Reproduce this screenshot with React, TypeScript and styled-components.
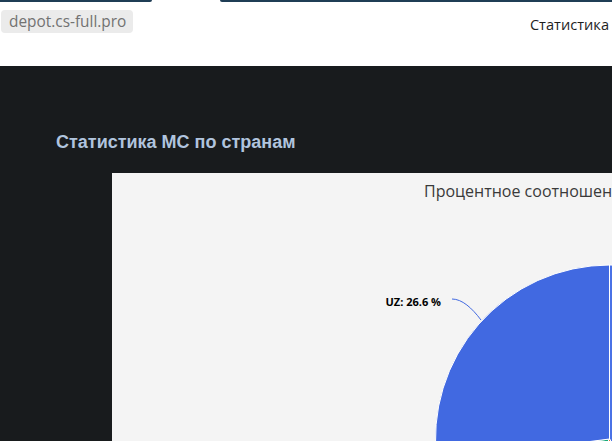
import styled, { createGlobalStyle } from "styled-components";

const GlobalStyle = createGlobalStyle`
  html, body {
    margin: 0;
    padding: 0;
    background: #ffffff;
    overflow: hidden;
  }
  body {
    width: 612px;
    height: 441px;
    font-family: "Open Sans", "Noto Sans", sans-serif;
  }
`;

const slices = [
  { name: "RU", value: 40.1, color: "#4a72e6" },
  { name: "KZ", value: 18.3, color: "#e8743b" },
  { name: "TJ", value: 13.4, color: "#19a979" },
  { name: "UZ", value: 26.6, color: "#4169e1" },
];

const CX = 497.5;
const CY = 237;
const R = 174;

function point(angle: number, r: number) {
  const rad = ((angle - 90) * Math.PI) / 180;
  return [CX + r * Math.cos(rad), CY + r * Math.sin(rad)];
}

function slicePath(start: number, end: number) {
  const [x1, y1] = point(start, R);
  const [x2, y2] = point(end, R);
  const large = end - start > 180 ? 1 : 0;
  return `M${CX} ${CY} L${x1} ${y1} A${R} ${R} 0 ${large} 1 ${x2} ${y2} Z`;
}

const App = () => {
  const total = slices.reduce((sum, s) => sum + s.value, 0);
  let acc = 0;
  const arcs = slices.map((s) => {
    const start = (acc / total) * 360;
    acc += s.value;
    const end = (acc / total) * 360;
    return { ...s, start, end };
  });

  return (
    <>
      <GlobalStyle />
      <TopStrip>
        <TabEdge $side="left" />
        <TabEdge $side="right" />
      </TopStrip>
      <Header>
        <Badge>depot.cs-full.pro</Badge>
        <NavLink>Статистика</NavLink>
      </Header>
      <Main>
        <Heading>Статистика МС по странам</Heading>
        <ChartPanel>
          <ChartTitle>Процентное соотношение МС по странам</ChartTitle>
          <ChartSvg width="995" height="420" viewBox="0 0 995 420">
            {arcs.map((a) => (
              <path
                key={a.name}
                d={slicePath(a.start, a.end)}
                fill={a.color}
                stroke="#ffffff"
                strokeWidth="1"
                strokeLinejoin="round"
              />
            ))}
            <path
              d="M340 97 C 350 97, 360 106, 369 118"
              fill="none"
              stroke="#4169e1"
              strokeWidth="1"
            />
            <LabelText x="329" y="104" textAnchor="end">
              UZ: 26.6 %
            </LabelText>
          </ChartSvg>
        </ChartPanel>
      </Main>
    </>
  );
};

export default App;

const TopStrip = styled.div`
  display: flex;
  justify-content: space-between;
  height: 2px;
`;

const TabEdge = styled.div<{ $side: "left" | "right" }>`
  height: 2px;
  width: ${(p) => (p.$side === "left" ? "152px" : "392px")};
  background: #1f3d55;
  border-radius: ${(p) => (p.$side === "left" ? "0 0 6px 0" : "0 0 0 6px")};
`;

const Header = styled.div`
  display: flex;
  justify-content: space-between;
  align-items: flex-start;
  height: 64px;
`;

const Badge = styled.span`
  margin: 8px 0 0 1px;
  padding: 0 7px 0 8px;
  height: 23px;
  line-height: 23px;
  border-radius: 4px;
  background: #ebebeb;
  color: #727272;
  font-size: 15.4px;
`;

const NavLink = styled.span`
  margin-top: 12px;
  margin-right: 3px;
  color: #1e1e1e;
  font-size: 14.6px;
  line-height: 20px;
`;

const Main = styled.div`
  background: #181b1d;
  padding: 66px 0 0 56px;
  height: 400px;
`;

const Heading = styled.h2`
  margin: 0;
  font-family: "Liberation Sans", Arial, sans-serif;
  font-weight: 700;
  font-size: 18px;
  line-height: 20px;
  color: #b0c4de;
`;

const ChartPanel = styled.div`
  margin: 21px 0 0 56px;
  width: 995px;
  height: 420px;
  background: #f4f4f4;
  display: flex;
  flex-direction: column;
`;

const ChartTitle = styled.div`
  padding: 7px 0 0 312px;
  height: 25px;
  font-size: 16px;
  line-height: 22px;
  color: #3a3a3a;
  white-space: nowrap;
`;

const ChartSvg = styled.svg`
  display: block;
  flex: none;
`;

const LabelText = styled.text`
  font-family: "Open Sans", "Noto Sans", sans-serif;
  font-size: 11px;
  font-weight: 700;
  fill: #000000;
`;
